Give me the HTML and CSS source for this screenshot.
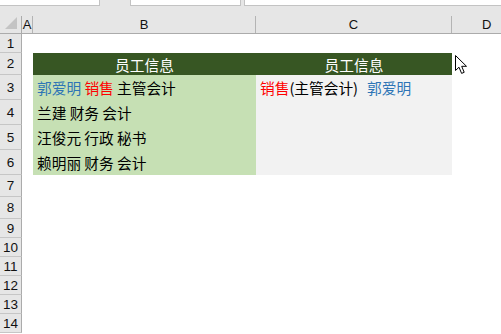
FILE: index.html
```html
<!DOCTYPE html>
<html lang="zh">
<head>
<meta charset="utf-8">
<title>员工信息</title>
<link rel="stylesheet" href="styles.css">
</head>
<body>
<div class="app">
  <div class="top">
    <div class="toolbar">
      <div class="box box1"></div>
      <div class="box box2"></div>
      <div class="box box3"></div>
    </div>
    <div class="colheads">
      <div class="corner"><span class="tri"></span></div>
      <div class="ch">A</div>
      <div class="ch">B</div>
      <div class="ch">C</div>
      <div class="ch last">D</div>
    </div>
  </div>
  <div class="sheet">
    <div class="row h19"><div class="rh">1</div><div class="c"></div><div class="c"></div><div class="c"></div><div class="c"></div></div>
    <div class="row h22"><div class="rh">2</div><div class="c"></div><div class="c head"><span class="t">员工信息</span></div><div class="c head"><span class="t">员工信息</span></div><div class="c"></div></div>
    <div class="row h25"><div class="rh">3</div><div class="c"></div><div class="c lg"><span class="t"><span class="blue">郭爱明</span> <span class="red">销售</span> 主管会计</span></div><div class="c gr"><span class="t"><span class="red">销售</span>(主管会计)<span class="blue sp">郭爱明</span></span></div><div class="c"></div></div>
    <div class="row h25"><div class="rh">4</div><div class="c"></div><div class="c lg"><span class="t">兰建 财务 会计</span></div><div class="c gr"></div><div class="c"></div></div>
    <div class="row h25"><div class="rh">5</div><div class="c"></div><div class="c lg"><span class="t">汪俊元 行政 秘书</span></div><div class="c gr"></div><div class="c"></div></div>
    <div class="row h25"><div class="rh">6</div><div class="c"></div><div class="c lg"><span class="t">赖明丽 财务 会计</span></div><div class="c gr"></div><div class="c"></div></div>
    <div class="row h22"><div class="rh">7</div><div class="c"></div><div class="c"></div><div class="c"></div><div class="c"></div></div>
    <div class="row h22"><div class="rh">8</div><div class="c"></div><div class="c"></div><div class="c"></div><div class="c"></div></div>
    <div class="row h19"><div class="rh">9</div><div class="c"></div><div class="c"></div><div class="c"></div><div class="c"></div></div>
    <div class="row h19"><div class="rh">10</div><div class="c"></div><div class="c"></div><div class="c"></div><div class="c"></div></div>
    <div class="row h19"><div class="rh">11</div><div class="c"></div><div class="c"></div><div class="c"></div><div class="c"></div></div>
    <div class="row h19"><div class="rh">12</div><div class="c"></div><div class="c"></div><div class="c"></div><div class="c"></div></div>
    <div class="row h19"><div class="rh">13</div><div class="c"></div><div class="c"></div><div class="c"></div><div class="c"></div></div>
    <div class="row h19"><div class="rh">14</div><div class="c"></div><div class="c"></div><div class="c"></div><div class="c"></div></div>
  </div>
  <svg class="cursor" width="13" height="20" viewBox="0 0 13 20"><path d="M0.5 0.5 L0.5 15.5 L4 12.2 L6.6 18.4 L9.2 17.3 L6.7 11.3 L11.5 11.3 Z" fill="#fff" stroke="#000" stroke-width="1" stroke-linejoin="miter"/></svg>
</div>
</body>
</html>
```
FILE: styles.css
```css
html, body {
  margin: 0;
  padding: 0;
  background: #fff;
}
.app {
  position: relative;
  width: 501px;
  height: 334px;
  overflow: hidden;
  font-family: "Liberation Sans", Arial, sans-serif;
}
.top {
  background: #e6e6e6;
}
.toolbar {
  height: 16px;
  display: flex;
  align-items: flex-start;
}
.box {
  background: #fff;
  border: 1px solid #c3c3c3;
  border-top: none;
  box-sizing: border-box;
  height: 6px;
}
.box1 { width: 100px; border-left: none; }
.box2 { width: 111px; margin-left: 30px; }
.box3 { flex: 1; margin-left: 3px; border-right: none; }
.colheads, .row {
  display: grid;
  grid-template-columns: 22px 11px 223px 196px 1fr;
}
.colheads {
  height: 18px;
  border-bottom: 1px solid #ababab;
  box-sizing: border-box;
}
.corner {
  position: relative;
  border-right: 1px solid #ababab;
}
.tri {
  position: absolute;
  right: 4px;
  bottom: 4px;
  width: 0;
  height: 0;
  border-style: solid;
  border-width: 0 0 12px 12px;
  border-color: transparent transparent #c4c4c4 transparent;
}
.ch {
  border-right: 1px solid #b4b4b4;
  font-size: 13px;
  line-height: 17px;
  text-align: center;
  color: #111;
}
.ch.last { border-right: none; text-align: left; padding-left: 30px; }
.row { box-sizing: border-box; }
.h19 { height: 19px; }
.h22 { height: 22px; }
.h25 { height: 25px; }
.rh {
  background: #e6e6e6;
  border-right: 1px solid #ababab;
  border-bottom: 1px solid #c6c6c6;
  box-sizing: border-box;
  font-size: 13.5px;
  color: #111;
  display: flex;
  align-items: center;
  justify-content: center;
}
.c {
  font-family: "Noto Sans CJK SC", "Noto Sans", sans-serif;
  font-size: 14.7px;
  color: #000;
  display: flex;
  align-items: center;
  padding-left: 4px;
  overflow: hidden;
}
.t { white-space: pre; }
.head {
  background: #375623;
  color: #fff;
  justify-content: center;
  padding-left: 0;
}
.lg { background: #c6e0b4; }
.gr { background: #f2f2f2; }
.blue { color: #2e75b6; }
.red { color: #ff0000; }
.sp { margin-left: 9px; }
.cursor {
  position: absolute;
  left: 455px;
  top: 55px;
}
```
